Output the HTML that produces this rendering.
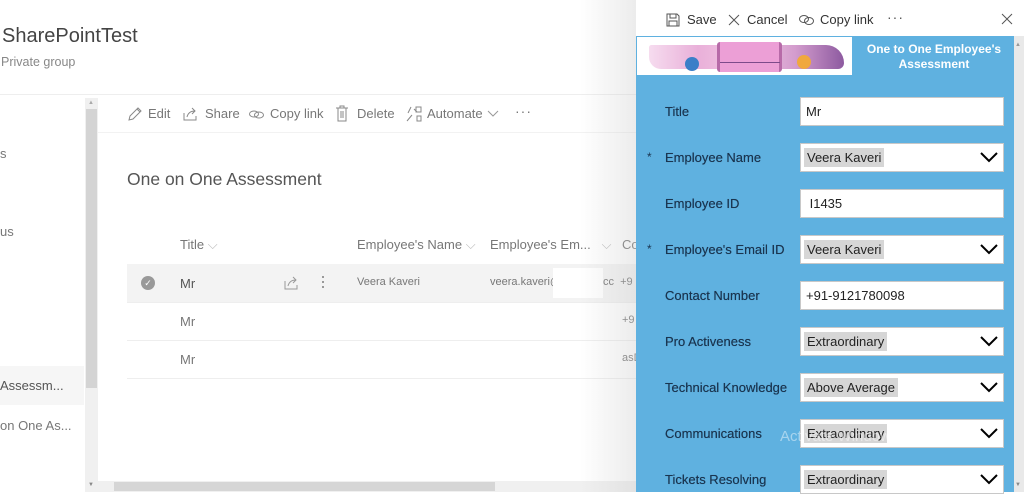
<!DOCTYPE html>
<html><head><meta charset="utf-8"><style>
*{margin:0;padding:0;box-sizing:border-box}
body{width:1024px;height:492px;overflow:hidden;background:#fff;font-family:"Segoe UI","Liberation Sans","DejaVu Sans",sans-serif;position:relative;color:#333}
.a{position:absolute;white-space:nowrap}
.g{color:#777}
.lbl{position:absolute;left:665px;font-size:13px;color:#1a3550;text-shadow:0 0 0.4px #1a3550}
.inp{position:absolute;left:800px;width:204px;height:29px;background:#fff;border:1px solid #c8c8c8;font-size:13px;color:#222;padding:6px 5px}
.inp span.s{background:#d6d6d6;padding:2px 3px;margin-left:-2px}
.chev{position:absolute;right:5px;top:7px}
</style></head><body>
<div class="a" style="left:2px;top:25px;font-size:20px;color:#444">SharePointTest</div>
<div class="a" style="left:1px;top:55px;font-size:12.5px;color:#888">Private group</div>
<div class="a" style="left:0;top:94px;width:636px;height:1px;background:#eee"></div>
<div class="a g" style="left:0;top:146px;font-size:13px">s</div>
<div class="a g" style="left:0;top:224px;font-size:13px">us</div>
<div class="a" style="left:0;top:366px;width:84px;height:39px;background:#f6f6f6"></div>
<div class="a" style="left:0;top:378px;font-size:13px;color:#555">Assessm...</div>
<div class="a g" style="left:0;top:418px;font-size:13px">on One As...</div>
<div class="a" style="left:85px;top:98px;width:13px;height:394px;background:#f0f0f0"></div>
<div class="a" style="left:86px;top:109px;width:11px;height:279px;background:#d4d4d4"></div>
<div class="a" style="left:88px;top:100px;font-size:6px;color:#aaa">▲</div>
<div class="a" style="left:88px;top:482px;font-size:6px;color:#888">▼</div>
<div class="a" style="left:98px;top:132px;width:538px;height:1px;background:#f2f2f2"></div>
<svg class="a" style="left:127px;top:106px" width="16" height="16" viewBox="0 0 16 16" fill="none" stroke="#888" stroke-width="1"><path d="M2 14l1-4 8-8 3 3-8 8z M10 3l3 3"/></svg>
<div class="a g" style="left:148px;top:106px;font-size:13px">Edit</div>
<svg class="a" style="left:182px;top:106px" width="16" height="16" viewBox="0 0 16 16" fill="none" stroke="#888"><path d="M2 7v7h12v-4 M5 11c1-4 4-6 8-6 M10 2l3 3-3 3"/></svg>
<div class="a g" style="left:205px;top:106px;font-size:13px">Share</div>
<svg class="a" style="left:248px;top:106px" width="18" height="16" viewBox="0 0 18 16" fill="none" stroke="#888"><ellipse cx="6" cy="8" rx="4.5" ry="3"/><ellipse cx="11" cy="9" rx="4.5" ry="3"/></svg>
<div class="a g" style="left:270px;top:106px;font-size:13px">Copy link</div>
<svg class="a" style="left:335px;top:105px" width="14" height="17" viewBox="0 0 14 17" fill="none" stroke="#888"><path d="M1 3h12 M5 3V1h4v2 M3 3v13h8V3 M6 6v7 M8 6v7"/></svg>
<div class="a g" style="left:357px;top:106px;font-size:13px">Delete</div>
<svg class="a" style="left:405px;top:105px" width="18" height="17" viewBox="0 0 18 17" fill="none" stroke="#888"><path d="M2 16l5-6 M3 8l3-6 M9 4l3 3 M11 2h5v5h-5z M12 11h4v5h-4z"/></svg>
<div class="a g" style="left:427px;top:106px;font-size:13px">Automate</div>
<svg class="a" style="left:487px;top:110px" width="12" height="8"><path d="M1 1l5 5 5-5" fill="none" stroke="#999"/></svg>
<div class="a g" style="left:515px;top:103px;font-size:14px;letter-spacing:1px">···</div>
<div class="a" style="left:127px;top:169px;font-size:17.5px;color:#555">One on One Assessment</div>
<div class="a g" style="left:180px;top:237px;font-size:13px">Title <span style="color:#bbb">⌵</span></div>
<div class="a g" style="left:357px;top:237px;font-size:13px">Employee's Name <span style="color:#bbb">⌵</span></div>
<div class="a g" style="left:490px;top:237px;font-size:13px">Employee's Em... &nbsp;&nbsp;<span style="color:#bbb">⌵</span></div>
<div class="a g" style="left:622px;top:237px;font-size:13px">Co</div>
<div class="a" style="left:127px;top:264px;width:509px;height:38px;background:#f3f3f3"></div>
<div class="a" style="left:141px;top:276px;width:14px;height:14px;border-radius:50%;background:#999;color:#fff;font-size:9px;text-align:center;line-height:14px">✓</div>
<div class="a" style="left:180px;top:276px;font-size:13px;color:#555">Mr</div>
<svg class="a" style="left:283px;top:275px" width="16" height="15" viewBox="0 0 16 15" fill="none" stroke="#999"><path d="M2 6v8h12v-4 M5 11c1-4 4-6 8-6 M10 2l3 3-3 3"/></svg>
<div class="a" style="left:322px;top:276px;width:2px;height:2px;background:#999;box-shadow:0 5px #999,0 10px #999"></div>
<div class="a g" style="left:357px;top:276px;font-size:11px">Veera Kaveri</div>
<div class="a g" style="left:490px;top:276px;font-size:11px">veera.kaveri@</div>
<div class="a" style="left:553px;top:268px;width:50px;height:30px;background:#fff"></div>
<div class="a g" style="left:603px;top:276px;font-size:11px">cc &nbsp;+9</div>
<div class="a" style="left:127px;top:302px;width:509px;height:1px;background:#eee"></div>
<div class="a g" style="left:180px;top:314px;font-size:13px">Mr</div>
<div class="a g" style="left:622px;top:314px;font-size:11px">+9</div>
<div class="a" style="left:127px;top:340px;width:509px;height:1px;background:#eee"></div>
<div class="a g" style="left:180px;top:352px;font-size:13px">Mr</div>
<div class="a g" style="left:622px;top:352px;font-size:11px">asD</div>
<div class="a" style="left:127px;top:378px;width:509px;height:1px;background:#eee"></div>
<div class="a" style="left:98px;top:481px;width:538px;height:11px;background:#f0f0f0"></div>
<div class="a" style="left:114px;top:482px;width:381px;height:9px;background:#d6d6d6"></div>
<div class="a" style="left:580px;top:0;width:56px;height:492px;background:linear-gradient(to right,rgba(220,220,220,0),rgba(200,200,200,.35))"></div>
<div class="a" style="left:636px;top:0;width:388px;height:36px;background:#fff"></div>
<svg class="a" style="left:666px;top:13px" width="14" height="14" viewBox="0 0 14 14" fill="none" stroke="#555"><path d="M1 1h10l2 2v10H1z M4 1v4h6V1 M3 13V8h8v5"/></svg>
<div class="a" style="left:687px;top:12px;font-size:13px;color:#333">Save</div>
<svg class="a" style="left:728px;top:14px" width="12" height="12"><path d="M1 1l10 10M11 1L1 11" stroke="#555"/></svg>
<div class="a" style="left:747px;top:12px;font-size:13px;color:#333">Cancel</div>
<svg class="a" style="left:798px;top:14px" width="17" height="12" viewBox="0 0 17 12" fill="none" stroke="#555"><ellipse cx="6" cy="5" rx="4.5" ry="3.5"/><ellipse cx="11" cy="7" rx="4.5" ry="3.5"/></svg>
<div class="a" style="left:820px;top:12px;font-size:13px;color:#333">Copy link</div>
<div class="a" style="left:887px;top:9px;font-size:14px;color:#555;letter-spacing:1px">···</div>
<svg class="a" style="left:1001px;top:13px" width="12" height="12"><path d="M1 1l10 10M11 1L1 11" stroke="#555"/></svg>
<div class="a" style="left:636px;top:36px;width:378px;height:456px;background:#5fb1e0"></div>
<div class="a" style="left:1014px;top:36px;width:10px;height:456px;background:#e9e9e9"></div>
<div class="a" style="left:1015px;top:42px;font-size:6px;color:#999">▲</div>
<div class="a" style="left:637px;top:37px;width:215px;height:38px;background:#fff;overflow:hidden">
<div class="a" style="left:12px;top:8px;width:195px;height:24px;border-radius:4px 30px 10px 20px;background:linear-gradient(90deg,#f6dcef,#e9b0d9,#f3c8e4,#d39ccd,#8d5aa0)"></div>
<div class="a" style="left:80px;top:5px;width:65px;height:30px;background:#ec9fd6;border-left:3px solid #b76aa8;border-right:3px solid #b76aa8;border-radius:3px"></div>
<div class="a" style="left:83px;top:25px;width:60px;height:1px;background:#7d4a8a"></div>
<div class="a" style="left:48px;top:20px;width:14px;height:14px;border-radius:50%;background:#3b7fc8"></div>
<div class="a" style="left:160px;top:18px;width:14px;height:14px;border-radius:50%;background:#f0a83e"></div>
</div>
<div class="a" style="left:852px;top:42px;width:164px;text-align:center;white-space:normal;font-size:12px;font-weight:bold;color:#fff;line-height:15px">One to One Employee's Assessment</div>

<div class="lbl" style="top:104px">Title</div>
<div class="inp" style="top:97px">Mr</div>
<div class="a" style="left:647px;top:150px;font-size:12px;color:#1a3550">*</div>
<div class="lbl" style="top:150px">Employee Name</div>
<div class="inp" style="top:143px"><span class="s">Veera Kaveri</span><svg class="chev" width="18" height="12"><path d="M1 2l8 8 8-8" fill="none" stroke="#000" stroke-width="2"/></svg></div>
<div class="lbl" style="top:196px">Employee ID</div>
<div class="inp" style="top:189px">&nbsp;I1435</div>
<div class="a" style="left:647px;top:242px;font-size:12px;color:#1a3550">*</div>
<div class="lbl" style="top:242px">Employee's Email ID</div>
<div class="inp" style="top:235px"><span class="s">Veera Kaveri</span><svg class="chev" width="18" height="12"><path d="M1 2l8 8 8-8" fill="none" stroke="#000" stroke-width="2"/></svg></div>
<div class="lbl" style="top:288px">Contact Number</div>
<div class="inp" style="top:281px">+91-9121780098</div>
<div class="lbl" style="top:334px">Pro Activeness</div>
<div class="inp" style="top:327px"><span class="s">Extraordinary</span><svg class="chev" width="18" height="12"><path d="M1 2l8 8 8-8" fill="none" stroke="#000" stroke-width="2"/></svg></div>
<div class="lbl" style="top:380px">Technical Knowledge</div>
<div class="inp" style="top:373px"><span class="s">Above Average</span><svg class="chev" width="18" height="12"><path d="M1 2l8 8 8-8" fill="none" stroke="#000" stroke-width="2"/></svg></div>
<div class="lbl" style="top:426px">Communications</div>
<div class="inp" style="top:419px"><span class="s">Extraordinary</span><svg class="chev" width="18" height="12"><path d="M1 2l8 8 8-8" fill="none" stroke="#000" stroke-width="2"/></svg></div>
<div class="lbl" style="top:472px">Tickets Resolving</div>
<div class="inp" style="top:465px"><span class="s">Extraordinary</span><svg class="chev" width="18" height="12"><path d="M1 2l8 8 8-8" fill="none" stroke="#000" stroke-width="2"/></svg></div>
<div class="a" style="left:780px;top:428px;font-size:15px;color:rgba(255,255,255,.45)">Activate Windows</div>
<div class="a" style="left:1015px;top:482px;font-size:6px;color:#888">▼</div>
</body></html>
